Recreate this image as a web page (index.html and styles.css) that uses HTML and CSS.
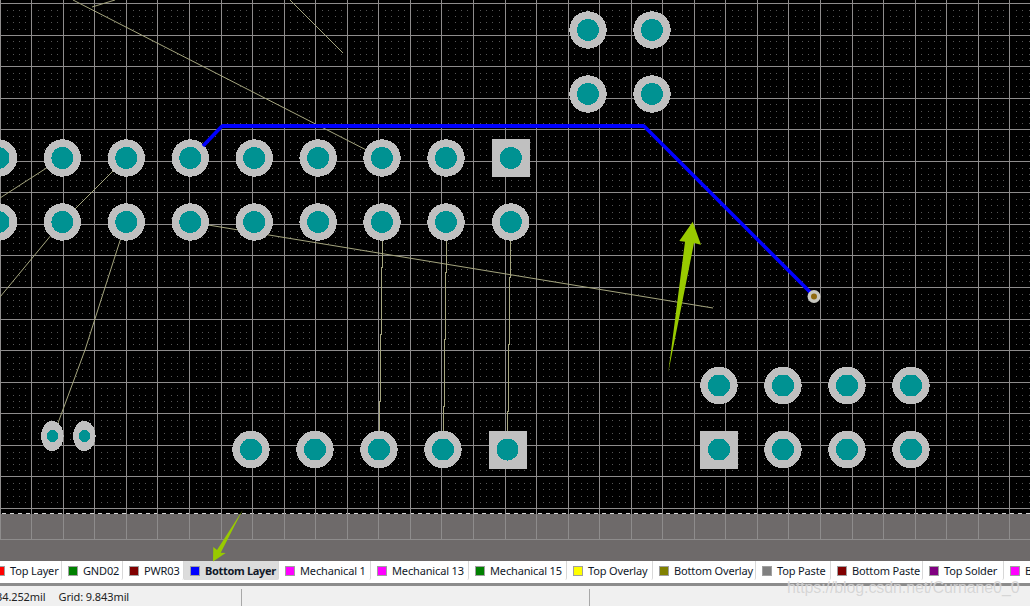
FILE: index.html
```html
<!DOCTYPE html>
<html lang="en">
<head>
<meta charset="utf-8">
<title>PCB Editor</title>
<link rel="stylesheet" href="styles.css">
</head>
<body>
<div class="app">
  <div class="canvas" id="canvas">
    <svg class="board" width="1030" height="561" viewBox="0 0 1030 561" xmlns="http://www.w3.org/2000/svg">
      <g id="dots"></g>
      <rect class="sheet" x="0" y="514" width="1030" height="47"/>
      <line class="edge" x1="0" y1="513.5" x2="1030" y2="513.5"/>
      <g id="grid"></g>
      <g class="rats">
        <path d="M73 0L382 158"/>
        <path d="M92 7L115 0"/>
        <path d="M290 0L343 53"/>
        <path d="M190 222L713 308"/>
        <path d="M62 158L0 198"/>
        <path d="M126 158L62 222"/>
        <path d="M62 222L0 297"/>
        <path d="M126 222L85 350L58 423"/>
      </g>
      <g class="rats stepped">
        <path d="M382.5 222V267H381.5V334H380.5V401H379.5V440"/>
        <path d="M446.5 222V272H445.5V339H444.5V406H443.5V440"/>
        <path d="M510.5 222V277H509.5V344H508.5V411H507.5V440"/>
      </g>
      <g id="pads"></g>
      <path class="track" d="M222 126H644"/>
      <path class="track diag" d="M203 146L222.6 125.6M643.4 125.4L812 294"/>
      <circle class="via" cx="814" cy="296.5" r="6.5"/>
      <circle class="via-hole" cx="814" cy="296.5" r="3"/>
      <path class="arrow" d="M692.7 221.7L701 244.7L694 243L668.3 372.3L685 241.7L679.3 241Z"/>
      <path class="arrow" d="M213 561.5L213.3 547L217 550L242.7 510L220.7 552.7L225.7 553Z"/>
    </svg>
  </div>
  <div class="tabs">
    <div class="tab first"><i class="sw red"></i>Top Layer</div>
    <div class="tab w61"><i class="sw green"></i>GND02</div>
    <div class="tab w61"><i class="sw maroon"></i>PWR03</div>
    <div class="tab active w95"><i class="sw blue"></i>Bottom Layer</div>
    <div class="tab w92"><i class="sw magenta"></i>Mechanical 1</div>
    <div class="tab w98"><i class="sw magenta"></i>Mechanical 13</div>
    <div class="tab w98"><i class="sw green"></i>Mechanical 15</div>
    <div class="tab w86"><i class="sw yellow"></i>Top Overlay</div>
    <div class="tab w103"><i class="sw olive"></i>Bottom Overlay</div>
    <div class="tab w75"><i class="sw gray"></i>Top Paste</div>
    <div class="tab w92"><i class="sw maroon"></i>Bottom Paste</div>
    <div class="tab w81"><i class="sw purple"></i>Top Solder</div>
    <div class="tab last"><i class="sw magenta"></i>Bottom Solder</div>
  </div>
  <div class="status">
    <div class="cell coords"><span>34.252mil</span><span>Grid: 9.843mil</span></div>
    <div class="cell mid"></div>
    <div class="cell rest"></div>
    <span class="mark">https://blog.csdn.net/Curnane0_0</span>
  </div>
</div>
<script src="board.js"></script>
</body>
</html>
```
FILE: styles.css
```css
html, body { margin: 0; padding: 0; }
body { width: 1030px; height: 606px; overflow: hidden; background: #f0f0f0; font-family: "Noto Sans", "Liberation Sans", sans-serif; }
.app { display: flex; flex-direction: column; width: 1030px; height: 606px; overflow: hidden; }
.canvas { height: 561px; flex: none; background: #000; position: relative; z-index: 1; }
.board { display: block; overflow: visible; }
.sheet { fill: #6e6a6a; }
.edge { stroke: #d4d4d4; stroke-width: 1; stroke-dasharray: 4 4; stroke-dashoffset: -2; }
.gridline { stroke: #8e8c8c; stroke-width: 1; shape-rendering: crispEdges; }
.dot { fill: #555; }
.rats path { fill: none; stroke: #a5a57e; stroke-width: 1; }
.stepped path { shape-rendering: crispEdges; }
.pad { fill: #c0c0c0; shape-rendering: crispEdges; }
.hole { fill: #009292; shape-rendering: crispEdges; }
.track { fill: none; stroke: #0000ff; stroke-width: 4; }
.diag { stroke-width: 3.6; }
.via { fill: #c8c8c0; }
.via-hole { fill: #8f6a10; }
.arrow { fill: #98ca00; }
.tabs { display: flex; box-sizing: border-box; height: 25px; flex: none; background: #fff; overflow: hidden; border-bottom: 3px solid #8c8c8c; }
.tab { display: flex; align-items: center; flex: none; box-sizing: border-box; height: 19px; padding-left: 6px; font-size: 11px; letter-spacing: -0.15px; color: #101828; border-right: 1px solid #d8d8d8; border-bottom-right-radius: 2px; background: #fff; white-space: nowrap; }
.first { width: 73px; margin-left: -11px; }
.w61 { width: 61px; }
.w95 { width: 95px; }
.w92 { width: 92px; }
.w98 { width: 98px; }
.w86 { width: 86px; }
.w103 { width: 103px; }
.w75 { width: 75px; }
.w81 { width: 81px; }
.last { width: 100px; }
.active { background: #dcdcdc; font-weight: 700; letter-spacing: -0.33px; }
.sw { display: block; flex: none; box-sizing: border-box; width: 10px; height: 10px; border: 1px solid #a0a0a0; margin-right: 5px; }
.red { background: #ff0000; }
.green { background: #008000; }
.maroon { background: #800000; }
.blue { background: #0000ff; }
.magenta { background: #ff00ff; }
.yellow { background: #ffff00; }
.olive { background: #808000; }
.gray { background: #808080; }
.purple { background: #800080; }
.status { position: relative; display: flex; flex: 1; background: #f0f0f0; font-size: 11px; letter-spacing: -0.1px; color: #222; }
.cell { box-sizing: border-box; border-right: 1px solid #a8a8a8; margin-top: 3px; display: flex; align-items: center; }
.coords { width: 246px; margin-left: -4px; gap: 13px; }
.coords span { position: relative; top: -1px; }
.mid { width: 348px; }
.rest { flex: 1; border-right: 0; }
.mark { position: absolute; left: 787px; top: -7px; font-size: 16px; letter-spacing: -0.1px; color: rgba(205,205,205,0.8); text-shadow: 0 0 1px rgba(255,255,255,0.6); white-space: nowrap; font-family: "Liberation Sans", sans-serif; }
```
FILE: board.js
```js
(function () {
  var NS = 'http://www.w3.org/2000/svg';
  var step = 31.55, x0 = 0.2, y0 = 3.5;
  function el(parent, name, attrs) {
    var n = document.createElementNS(NS, name);
    for (var k in attrs) n.setAttribute(k, attrs[k]);
    parent.appendChild(n);
    return n;
  }
  var dots = document.getElementById('dots');
  var grid = document.getElementById('grid');
  var pads = document.getElementById('pads');
  for (var i = 0; i < 33; i++) {
    var x = Math.floor(x0 + i * step) + 0.5;
    el(grid, 'line', { 'class': 'gridline', x1: x, y1: 0, x2: x, y2: 539 });
  }
  for (var j = 0; j < 18; j++) {
    var y = Math.floor(y0 + j * step) + 0.5;
    el(grid, 'line', { 'class': 'gridline', x1: 0, y1: y, x2: 1030, y2: y });
  }
  for (var a = 0; a < 165; a++) {
    if (a % 5 === 0) continue;
    for (var b = 0; b < 82; b++) {
      if (b % 5 === 0) continue;
      var dx = Math.round(x0 + a * step / 5), dy = Math.round(y0 + b * step / 5);
      if (dy > 511) continue;
      el(dots, 'rect', { 'class': 'dot', x: dx, y: dy, width: 1, height: 1 });
    }
  }
  function pad(x, y, square) {
    if (square) el(pads, 'rect', { 'class': 'pad', x: x - 19, y: y - 19, width: 38, height: 38 });
    else el(pads, 'circle', { 'class': 'pad', cx: x, cy: y, r: 18.7 });
    el(pads, 'circle', { 'class': 'hole', cx: x, cy: y, r: 11 });
  }
  [-1.5, 62.4, 126.3, 190.3, 254.2, 318.1, 382, 446].forEach(function (x) {
    pad(x, 158); pad(x, 222);
  });
  pad(510.8, 158, true); pad(510.8, 222);
  [251, 315, 379, 443].forEach(function (x) { pad(x, 449.5); });
  pad(507.5, 449.5, true);
  [783, 847, 911].forEach(function (x) { pad(x, 385.5); pad(x, 449.5); });
  pad(719, 385.5); pad(719, 449.5, true);
  [588, 652].forEach(function (x) { pad(x, 30); pad(x, 94); });
  [52.3, 84.3].forEach(function (x) {
    el(pads, 'ellipse', { 'class': 'pad', cx: x, cy: 436, rx: 11.3, ry: 15 });
    el(pads, 'circle', { 'class': 'hole', cx: x + 0.3, cy: 436, r: 6 });
  });
})();
```
